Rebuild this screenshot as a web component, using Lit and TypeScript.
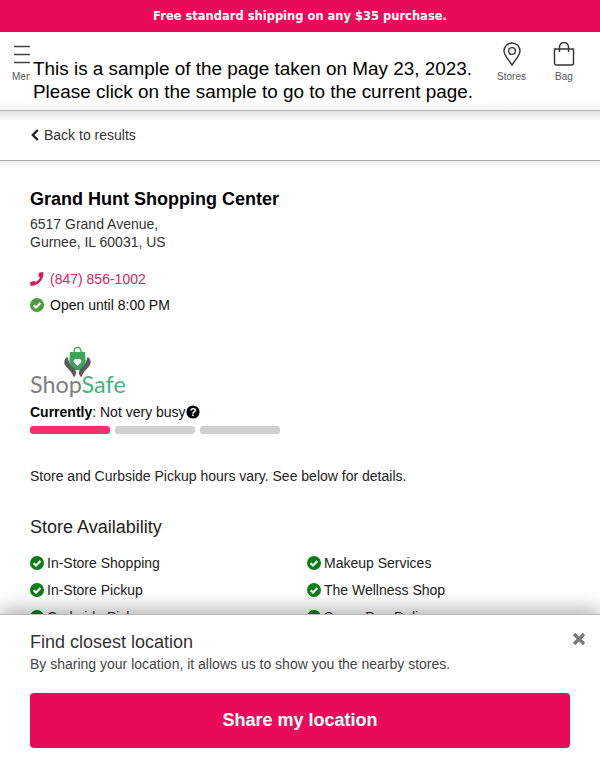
import { LitElement, html, css } from "lit";
import { customElement } from "lit/decorators.js";

const check = (cls: string) => html`<svg class="chk ${cls}" viewBox="0 0 14 14"><circle cx="7" cy="7" r="7" fill="currentColor"/><path d="M3.6 7.2 6 9.6 10.5 5" fill="none" stroke="#fff" stroke-width="2.1"/></svg>`;

const leftItems = ["In-Store Shopping", "In-Store Pickup", "Curbside Pickup"];
const rightItems = ["Makeup Services", "The Wellness Shop", "Same-Day Delivery"];

@customElement("app-root")
export class AppRoot extends LitElement {
  static styles = css`
    :host { display: block; position: relative; width: 600px; height: 768px; overflow: hidden; background: #fff; font-family: "Liberation Sans", Arial, sans-serif; color: #111; }
    .promo { height: 32px; background: #e90b5a; color: #fff; display: flex; align-items: center; justify-content: center; font-family: "DejaVu Sans", sans-serif; font-weight: 700; font-size: 11.5px; }
    .head { height: 79px; box-sizing: border-box; border-bottom: 1px solid #bbb; display: flex; justify-content: space-between; padding: 10px 25px 0 12px; background: linear-gradient(#fff 68px, #f3f3f3); }
    .hitem { display: flex; flex-direction: column; align-items: center; font-size: 10px; line-height: 12px; color: #555; gap: 5px; }
    .hitem svg { display: block; }
    .right { display: flex; gap: 27px; }
    .menu { width: 32px; white-space: nowrap; margin-top: 3px; align-items: flex-start; gap: 6px; }
    .menu svg { margin-left: 2px; }
    .notice { position: absolute; left: 30px; top: 57px; width: 454px; height: 47px; box-sizing: border-box; background: #fff; padding-left: 3px; font-size: 18.9px; line-height: 23px; color: #000; white-space: nowrap; }
    .back { height: 50px; box-sizing: border-box; border-bottom: 1px solid #aaa; display: flex; align-items: center; gap: 5px; padding: 0 31px 2px; font-size: 14px; color: #333; background: linear-gradient(#e2e2e2, #fff 10px); }
    .body { padding: 27px 30px 0; background: linear-gradient(#eee, #fff 8px); }
    h1 { margin: 0; font-size: 18px; line-height: 22px; font-weight: 700; color: #000; }
    .addr { margin-top: 5px; font-size: 14px; line-height: 18px; color: #333; }
    .phone { margin-top: 19px; display: flex; align-items: center; gap: 6px; font-size: 14px; line-height: 18px; color: #d3245f; }
    .open { margin-top: 8px; display: flex; align-items: center; gap: 6px; font-size: 14px; line-height: 18px; color: #111; }
    .chk { width: 14px; height: 14px; flex: none; display: block; }
    .chk.g1 { color: #4a9d3f; }
    .chk.g2 { color: #0d7d16; }
    .logo-wrap { position: relative; height: 50px; width: 100px; margin-top: 33px; }
    .logo-wrap svg { display: block; position: absolute; left: 34px; top: 0; }
    .logotext { position: absolute; left: 0; bottom: 0; font-size: 23.4px; line-height: 26px; color: #7e7e7e; font-family: "Lato", sans-serif; font-weight: 400; }
    .logotext span { color: #3fb67a; }
    .busy { margin-top: 6px; font-size: 14px; line-height: 18px; display: flex; align-items: center; color: #111; }
    .busy b { color: #000; }
    .busy svg { display: block; }
    .bars { display: flex; gap: 5px; margin-top: 5px; }
    .bars i { display: block; width: 80px; height: 8px; border-radius: 3px; background: #d0d0d0; }
    .bars i.on { background: #f5306d; }
    .note { margin-top: 33px; font-size: 14px; line-height: 18px; color: #222; }
    h2 { margin: 31px 0 0; font-size: 18px; line-height: 22px; font-weight: 400; color: #222; }
    .avail { margin-top: 16px; display: grid; grid-template-columns: 277px 1fr; row-gap: 9px; font-size: 14px; line-height: 18px; color: #222; }
    .av { display: flex; align-items: center; gap: 3px; }
    .sheet { position: absolute; left: 0; right: 0; bottom: 0; height: 154px; box-sizing: border-box; background: #fff; border-top: 1px solid #bbb; padding: 17px 30px 0; box-shadow: 0 -5px 18px rgba(0,0,0,.3); }
    .sheet h3 { margin: 0; font-size: 18px; line-height: 20px; font-weight: 400; color: #333; }
    .sheet p { margin: 3px 0 0; font-size: 14px; line-height: 18px; color: #444; }
    .close { position: absolute; top: 17px; right: 14px; display: block; }
    .cta { margin-top: 20px; height: 55px; width: 100%; border: 0; border-radius: 4px; background: #e90b5a; color: #fff; font: 700 18px "Liberation Sans", Arial, sans-serif; display: flex; align-items: center; justify-content: center; }
  `;

  render() {
    return html`
      <div class="promo">Free standard shipping on any $35 purchase.</div>
      <div class="head">
        <div class="hitem menu">
          <svg width="16" height="20" viewBox="0 0 16 20"><path d="M0 1.5H16M0 9.500H16M0 17.500H16" stroke="#444" stroke-width="1.300"/></svg>
          <span>Menu</span>
        </div>
        <div class="right">
          <div class="hitem">
            <svg width="18" height="24" viewBox="0 0 18 24"><path d="M9 23C5.500 17.500 1 13.500 1 9a8 8 0 0 1 16 0c0 4.500-4.500 8.500-8 14Z" fill="none" stroke="#333" stroke-width="1.400"/><circle cx="9" cy="9" r="3.400" fill="none" stroke="#333" stroke-width="1.400"/></svg>
            <span>Stores</span>
          </div>
          <div class="hitem">
            <svg width="22" height="24" viewBox="0 0 22 24"><path d="M1.500 7H20.500V21A2 2 0 0 1 18.500 23H3.500A2 2 0 0 1 1.500 21ZM6.500 10V5A4.500 4.500 0 0 1 15.500 5V10" fill="none" stroke="#333" stroke-width="1.400"/></svg>
            <span>Bag</span>
          </div>
        </div>
      </div>
      <div class="notice">This is a sample of the page taken on May 23, 2023.<br />Please click on the sample to go to the current page.</div>
      <div class="back">
        <svg width="8" height="12" viewBox="0 0 8 12"><path d="M6.800 1 1.800 6l5 5" fill="none" stroke="#222" stroke-width="2.400"/></svg>
        <span>Back to results</span>
      </div>
      <div class="body">
        <h1>Grand Hunt Shopping Center</h1>
        <div class="addr">6517 Grand Avenue,<br />Gurnee, IL 60031, US</div>
        <div class="phone">
          <svg width="14" height="14" viewBox="0 0 14 14"><path d="M9.300 0.600 13.200 0C14.600 6.500 8.500 13.800 0.700 14L0 10.200 4.300 8.700 5.400 10.100C7.500 9.100 9 7.500 10 5.500L8.300 4.300Z" fill="#e0185c"/></svg>
          <span>(847) 856-1002</span>
        </div>
        <div class="open">${check("g1")}<span>Open until 8:00 PM</span></div>
        <div class="logo-wrap">
          <svg width="27" height="31" viewBox="0 0 27 31">
            <path d="M10 6V4A3.500 3.500 0 0 1 17 4V6" fill="none" stroke="#45ad5c" stroke-width="1.500"/>
            <path d="M6 5H21L22 20Q22 23 19 23H8Q5 23 5 20Z" fill="#3aa655"/>
            <path d="M13.500 19 9.800 15.200A2.400 2.400 0 0 1 13.500 12.400 2.400 2.400 0 0 1 17.200 15.200Z" fill="#fff"/>
            <path d="M3.500 10C0.500 11 -0.500 15 1 18 2.500 21 6 23 8 26.500L10 30.500 12 27C12.500 24 10.500 21 8 19.500L5.500 16.500Z" fill="#5a5a5a"/>
            <path d="M23.500 10C26.500 11 27.500 15 26 18 24.500 21 21 23 19 26.500L17 30.500 15 27C14.500 24 16.500 21 19 19.500L21.500 16.500Z" fill="#5a5a5a"/>
          </svg>
          <div class="logotext">Shop<span>Safe</span></div>
        </div>
        <div class="busy"><span><b>Currently</b>: Not very busy</span>
          <svg width="14" height="14" viewBox="0 0 14 14"><circle cx="7" cy="7" r="6.600" fill="#000"/><text x="7" y="11" text-anchor="middle" font-family="Liberation Sans" font-weight="700" font-size="11" fill="#fff">?</text></svg>
        </div>
        <div class="bars"><i class="on"></i><i></i><i></i></div>
        <div class="note">Store and Curbside Pickup hours vary. See below for details.</div>
        <h2>Store Availability</h2>
        <div class="avail">
          ${leftItems.map((l, i) => html`
            <div class="av">${check("g2")}<span>${l}</span></div>
            <div class="av">${check("g2")}<span>${rightItems[i]}</span></div>`)}
        </div>
      </div>
      <div class="sheet">
        <h3>Find closest location</h3>
        <p>By sharing your location, it allows us to show you the nearby stores.</p>
        <svg class="close" width="14" height="14" viewBox="0 0 14 14"><path d="M2 2 12 12M12 2 2 12" stroke="#7a7a7a" stroke-width="3.200"/></svg>
        <button class="cta">Share my location</button>
      </div>
    `;
  }
}
